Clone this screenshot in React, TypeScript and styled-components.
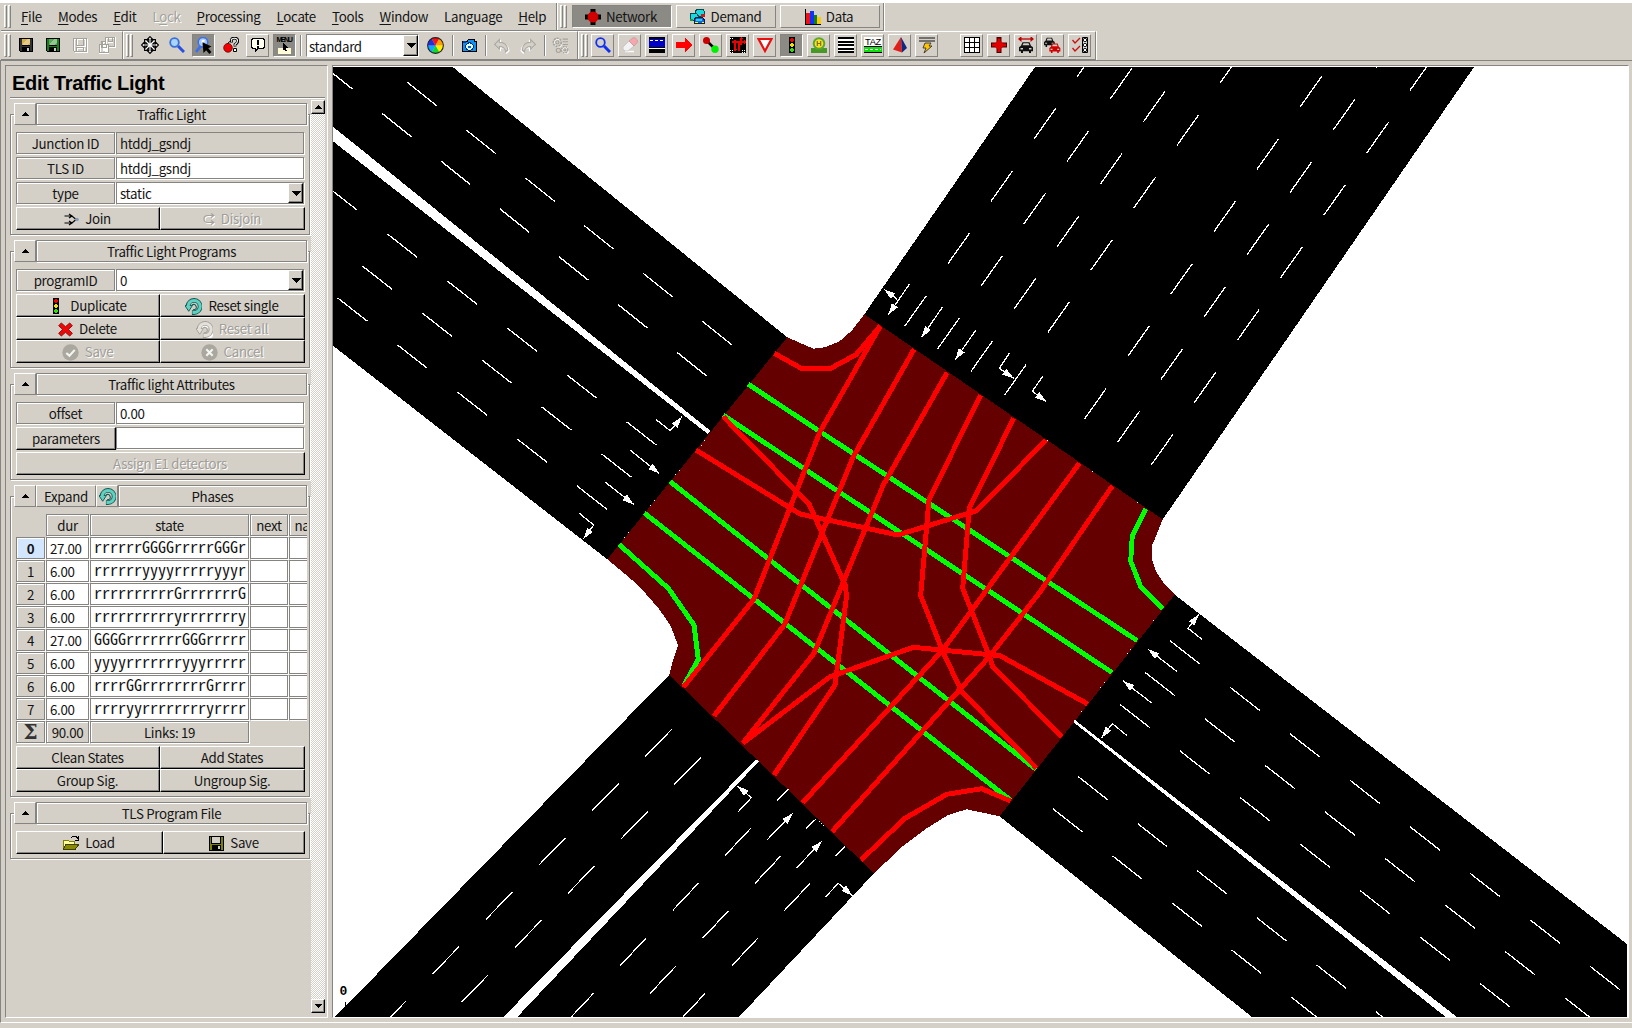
import React from "react";
import styled, { createGlobalStyle, css } from "styled-components";

const FACE = "#d4d0c8";
const SHADE = "#868480";
const PRESSED = "#8c8a84";

const Global = createGlobalStyle`
  html, body { margin: 0; padding: 0; background: ${FACE}; }
  body {
    overflow: hidden;
    font-family: "Noto Sans CJK SC", "Noto Sans", sans-serif;
    font-size: 13.33px;
    letter-spacing: -0.32px;
    color: #141414;
  }
  * { box-sizing: border-box; }
`;

/* ---------- frames ---------- */
const groove = css`
  border: 1px solid ${SHADE};
  box-shadow: inset 1px 1px 0 #fff, 1px 1px 0 #fff;
`;
const raised = css`
  border: 1px solid;
  border-color: #fff #000 #000 #fff;
  box-shadow: inset -1px -1px 0 ${SHADE};
`;
const thinRaised = css`
  border: 1px solid;
  border-color: #fff ${SHADE} ${SHADE} #fff;
`;

const Window = styled.div`
  width: 1632px;
  height: 1028px;
  display: flex;
  flex-direction: column;
  background: ${FACE};
  border-top: 3px solid #fff;
  overflow: hidden;
`;
const BarRow = styled.div<{ $h: number }>`
  display: flex;
  height: ${(p) => p.$h}px;
  flex: none;
  padding-left: 1px;
`;
const Bar = styled.div<{ $w: number; $top?: boolean }>`
  display: flex;
  align-items: center;
  width: ${(p) => p.$w}px;
  flex: none;
  padding-left: 3px;
  border-right: 1px solid ${SHADE};
  border-bottom: 1px solid ${SHADE};
  border-top: ${(p) => (p.$top ? "1px solid #fff" : "none")};
  box-shadow: 1px 0 0 #fff;
`;
const Grip = styled.div`
  display: flex;
  gap: 1px;
  height: 23px;
  width: 7px;
  flex: none;
  &::before, &::after {
    content: "";
    width: 3px;
    border: 1px solid;
    border-color: #fff ${SHADE} ${SHADE} #fff;
  }
`;
const Menus = styled.div`
  display: flex;
  padding-left: 10px;
  padding-top: 1px;
  gap: 16px;
  line-height: 24px;
  white-space: nowrap;
`;
const MenuName = styled.span<{ $off?: boolean }>`
  color: ${(p) => (p.$off ? "#a5a29b" : "#141414")};
  text-shadow: ${(p) => (p.$off ? "1px 1px 0 #fff" : "none")};
  u { text-underline-offset: 2px; text-decoration-thickness: 1px; }
`;
const ModeTabs = styled.div`
  display: flex;
  gap: 4px;
  padding-left: 5px;
`;
const ModeTab = styled.div<{ $on?: boolean }>`
  display: flex;
  align-items: center;
  justify-content: center;
  gap: 5px;
  width: 100px;
  height: 23px;
  padding-right: 2px;
  line-height: 21px;
  ${thinRaised}
  ${(p) => p.$on && css`background: ${PRESSED}; border-color: ${SHADE} #fff #fff ${SHADE};`}
`;
const Tools = styled.div<{ $pl: number }>`
  display: flex;
  align-items: center;
  gap: 4px;
  padding-left: ${(p) => p.$pl}px;
`;
const Tool = styled.div<{ $kind?: "flat" | "up" | "down" }>`
  display: flex;
  align-items: center;
  justify-content: center;
  width: 23px;
  height: 23px;
  padding-bottom: 1px;
  border: 1px solid transparent;
  ${(p) => p.$kind === "up" && thinRaised}
  ${(p) => p.$kind === "down" && css`background: ${PRESSED}; border-color: ${SHADE} #fff #fff ${SHADE};`}
`;
const Sep = styled.div<{ $ml?: number; $mr?: number }>`
  width: 2px;
  height: 21px;
  margin: 0 ${(p) => p.$mr ?? 0}px 0 ${(p) => p.$ml ?? 0}px;
  border-left: 1px solid ${SHADE};
  border-right: 1px solid #fff;
`;
const Gap = styled.div<{ $w: number }>`
  width: ${(p) => p.$w}px;
`;
const SchemeBox = styled.div`
  display: flex;
  width: 113px;
  height: 23px;
  margin-right: 1px;
  background: #fff;
  border: 1px solid;
  border-color: ${SHADE} #fff #fff ${SHADE};
  padding: 0 0 0 2px;
  line-height: 23px;
  justify-content: space-between;
`;
const DropBtn = styled.div`
  display: flex;
  align-items: center;
  justify-content: center;
  width: 15px;
  background: ${FACE};
  ${raised}
`;

/* ---------- main area ---------- */
const Main = styled.div`
  display: flex;
  height: 963px;
  flex: none;
  border-top: 1px solid ${SHADE};
  border-left: 1px solid ${SHADE};
  border-bottom: 1px solid #fff;
  padding: 4px 3px 4px 4px;
  gap: 4px;
`;
const SidePanel = styled.div`
  width: 323px;
  flex: none;
  display: flex;
  flex-direction: column;
  border: 1px solid;
  border-color: ${SHADE} #fff #fff ${SHADE};
  padding: 0 2px 4px 4px;
`;
const PanelTitle = styled.div`
  height: 32px;
  flex: none;
  padding: 1px 0 0 2px;
  font: bold 20px/33px "Liberation Sans", Arial, sans-serif;
  letter-spacing: -0.3px;
  color: #000;
  border-bottom: 1px solid ${SHADE};
  box-shadow: 0 1px 0 #fff;
`;
const PanelBody = styled.div`
  display: flex;
  flex: 1;
  padding-top: 2px;
`;
const Groups = styled.div`
  width: 301px;
  flex: none;
  padding-top: 3px;
  display: flex;
  flex-direction: column;
  gap: 5px;
`;
const Scroll = styled.div`
  width: 15px;
  display: flex;
  flex-direction: column;
  justify-content: space-between;
  background: repeating-conic-gradient(#fff 0 25%, ${FACE} 0 50%) 0 0 / 2px 2px;
`;
const ScrollBtn = styled.div`
  height: 14px;
  display: flex;
  align-items: center;
  justify-content: center;
  background: ${FACE};
  ${raised}
`;
const Group = styled.section`
  width: 300px;
  margin-top: 11px;
  border: 1px solid ${SHADE};
  box-shadow: inset 1px 1px 0 #fff, 1px 1px 0 #fff;
  padding: 0 0 4px 5px;
`;
const GroupHead = styled.div`
  display: flex;
  width: 294px;
  height: 23px;
  margin: -12px 0 6px -2px;
  background: ${FACE};
`;
const HeadBtn = styled.div<{ $w: number }>`
  display: flex;
  align-items: center;
  justify-content: center;
  width: ${(p) => p.$w}px;
  height: 22px;
  ${thinRaised}
`;
const HeadTitle = styled.div`
  flex: 1;
  height: 22px;
  margin-right: 1px;
  line-height: 22px;
  text-align: center;
  ${groove}
`;
const Row = styled.div`
  display: flex;
  height: 25px;
`;
const Label = styled.div<{ $button?: boolean }>`
  width: 99px;
  height: 22px;
  margin-right: 1px;
  line-height: 22px;
  text-align: center;
  ${groove}
  ${(p) => p.$button && css`width: 100px; height: 23px; margin-right: 0; ${raised}`}
`;
const Field = styled.div<{ $grey?: boolean }>`
  display: flex;
  justify-content: space-between;
  width: 188px;
  height: 22px;
  padding-left: 3px;
  line-height: 22px;
  background: ${(p) => (p.$grey ? FACE : "#fff")};
  border: 1px solid ${SHADE};
  box-shadow: 1px 1px 0 #fff;
`;
const Buttons = styled.div<{ $first?: number }>`
  display: grid;
  width: 289px;
  grid-template-columns: ${(p) => p.$first ?? 144}px 1fr;
  grid-auto-rows: 23px;
`;
const Button = styled.div<{ $off?: boolean; $wide?: boolean }>`
  display: flex;
  align-items: center;
  justify-content: center;
  gap: 6px;
  padding: 1px 1px 0 0;
  line-height: 20px;
  white-space: nowrap;
  ${raised}
  ${(p) => p.$wide && css`grid-column: 1 / 3; padding-left: 20px;`}
  ${(p) => p.$off && css`color: #a09d97; text-shadow: 1px 1px 0 #fff;`}
`;
const Table = styled.div`
  display: grid;
  grid-template-columns: 30px 44px 160px 39px 46px;
  grid-auto-rows: 23px;
  width: 291px;
  overflow: hidden;
  margin-bottom: 2px;
`;
const Cell = styled.div<{ $kind: "head" | "index" | "active" | "value" | "state" | "none" }>`
  margin: 0 1px 1px 0;
  line-height: 21px;
  text-align: center;
  white-space: nowrap;
  ${(p) => p.$kind !== "none" && groove}
  ${(p) => (p.$kind === "value" || p.$kind === "state") && css`
    background: #fff;
    box-shadow: 1px 1px 0 #fff;
    text-align: left;
    padding-left: 3px;
    line-height: 22px;
  `}
  ${(p) => p.$kind === "state" && css`
    font-family: "Noto Sans Mono CJK SC", "Liberation Mono", monospace;
    font-size: 16px;
    letter-spacing: 0;
    line-height: 17px;
  `}
  ${(p) => p.$kind === "active" && css`background: #d2e6ff; font-weight: bold;`}
`;
const SigmaCell = styled(Cell)`
  font: bold 20px/21px "DejaVu Serif", serif;
  color: #333;
`;
const Canvas = styled.div`
  flex: 1;
  border: 1px solid;
  border-color: ${SHADE} #fff #fff ${SHADE};
  padding-top: 1px;
  background: #fff;
  overflow: hidden;
  svg { display: block; }
`;

/* ---------- icons ---------- */
const Pix = ({ children, s = 16 }: { children: React.ReactNode; s?: number }) => (
  <svg width={s} height={s} viewBox="0 0 16 16" shapeRendering="crispEdges">{children}</svg>
);
const Smooth = ({ children, s = 16 }: { children: React.ReactNode; s?: number }) => (
  <svg width={s} height={s} viewBox="0 0 16 16">{children}</svg>
);
const Tri = ({ down, s = 8 }: { down?: boolean; s?: number }) => (
  <svg width={s} height={s / 2} viewBox="0 0 8 4" shapeRendering="crispEdges">
    <path d={down ? "M0 0H8L4 4Z" : "M0 4H8L4 0Z"} fill="#000" />
  </svg>
);
const Floppy = ({ body, tag }: { body: string; tag: string }) => (
  <Pix>
    <path d="M1 1H15V15H2L1 14Z" fill="#000" />
    <path d="M2 2H4V9H12V2H14V14H2Z" fill={body} />
    <path d="M4 2H12V8H4Z" fill={tag} />
    <path d="M5 6L9 2H12V5L9 8H5Z" fill="#fff" opacity=".35" />
    <path d="M4 10H12V15H4Z" fill="#000" />
    <path d="M9 11H11V14H9Z" fill="#c9c9c9" />
  </Pix>
);
const FloppyOff = () => (
  <Pix>
    <path d="M2.500 2.500H15.500V15.500H3.500L2.500 14.500ZM5 3V9H13V3M5 15V11H12V15" fill="none" stroke="#fff" />
    <path d="M1.500 1.500H14.500V14.500H2.500L1.500 13.500ZM4.500 2V8.500H11.500V2M4.500 14V10.500H11.500V14" fill="none" stroke="#a5a29b" />
  </Pix>
);
const FloppiesOff = () => (
  <Pix s={18}>
    <path d="M7 2H15V10H7ZM4 5H7M4 5V8M1.500 8.500H9V15.500H1.500ZM4 12H7V15M9 5H13" fill="none" stroke="#fff" strokeWidth="2" />
    <path d="M6.500 1.500H14.500V9.500H10M6.500 1.500V7M3.500 7V4.500H6M1.500 7.500H9.500V14.500H1.500ZM3.500 8V10.500H7.500V8M9 1.500V4.500H12.500V2" fill="none" stroke="#a5a29b" />
  </Pix>
);
const MoveIcon = () => (
  <Smooth s={18}>
    <path
      d="M8 .5L10.500 3H9V5.500L10.500 4V3.200H12.800V5.500H12L10.500 7H13V5.500L15.500 8L13 10.500V9H10.500L12 10.500H12.800V12.800H10.500V12L9 10.500V13H10.500L8 15.500L5.500 13H7V10.500L5.500 12V12.800H3.200V10.500H4L5.500 9H3V10.500L.5 8L3 5.500V7H5.500L4 5.500H3.200V3.200H5.500V4L7 5.500V3H5.500Z"
      fill="#fff" stroke="#000" strokeWidth="1"
    />
  </Smooth>
);
const MagnifierIcon = ({ stroke = "#3a6fd8", fill = "#a9d4ff", handle = "#2850e0" }) => (
  <Smooth>
    <path d="M9 9L15 15" stroke={handle} strokeWidth="3" />
    <circle cx="5.500" cy="5.500" r="4.300" fill={fill} stroke={stroke} strokeWidth="1.800" />
  </Smooth>
);
const InspectIcon = () => (
  <Smooth s={17}>
    <path d="M5 9L1 14" stroke="#3c6ff0" strokeWidth="2.500" />
    <circle cx="7.500" cy="5" r="4.500" fill="#a9c8f4" stroke="#3c6ff0" strokeWidth="1.500" />
    <path d="M7 3V6M7 3L9 4" stroke="#fff" strokeWidth="1.500" />
    <path d="M7 5L15.500 9L12.500 10.500L15.500 14L13.500 16L10.500 12.500L8 15Z" fill="#000" />
  </Smooth>
);
const HelpCherry = () => (
  <Smooth>
    <path d="M8.500 5.500V3Q8.500 1 11.500 1T14.800 3.800Q14.800 6 12 7.500V9.500" fill="none" stroke="#000" strokeWidth="2.800" />
    <path d="M8.500 5V3Q8.500 1.200 11.500 1.200T14.500 3.800Q14.500 6 12 7.500V9" fill="none" stroke="#fff" strokeWidth="1.100" />
    <path d="M10.500 11.500H13.500V14.500H10.500Z" fill="#fff" stroke="#000" />
    <path d="M4.500 7Q6 4 8.500 4" fill="none" stroke="#000" />
    <ellipse cx="5" cy="10.800" rx="4.300" ry="4.400" fill="#f00000" stroke="#600" strokeWidth=".8" />
  </Smooth>
);
const BubbleIcon = () => (
  <Pix>
    <path d="M3 1.500H13L14.500 3V10L13 11.500H8L5 15V11.500H3L1.500 10V3Z" fill="#fffff0" stroke="#000" />
    <path d="M7 3H9V8H7ZM7 9H9V11H7Z" fill="#000" />
  </Pix>
);
const MenuIcon = () => (
  <svg width="19" height="19" viewBox="0 0 19 19" shapeRendering="crispEdges">
    <path d="M3 12H16V18H3Z" fill="#fffbd6" />
    <path d="M8 7L13 12H11L12 15H10L9 13L8 14Z" fill="#000" />
    <text x="1.500" y="6" fontSize="7.200" fontWeight="bold" textLength="16" fontFamily="Liberation Sans, sans-serif">MENU</text>
  </svg>
);
const WheelIcon = () => (
  <Smooth s={17}>
    <path d="M8 8L4.300 1.500A7.500 7.500 0 0 1 11.700 1.500Z" fill="#ff1010" />
    <path d="M8 8L11.700 1.500A7.500 7.500 0 0 1 15.500 8Z" fill="#ffa000" />
    <path d="M8 8H15.500A7.500 7.500 0 0 1 11.700 14.500Z" fill="#fff000" />
    <path d="M8 8L11.700 14.500A7.500 7.500 0 0 1 4.300 14.500Z" fill="#10d830" />
    <path d="M8 8L4.300 14.500A7.500 7.500 0 0 1 .5 8Z" fill="#10a8ff" />
    <path d="M8 8H.5A7.500 7.500 0 0 1 4.300 1.500Z" fill="#2030e0" />
    <circle cx="8" cy="8" r="7.400" fill="none" stroke="#222" />
  </Smooth>
);
const CameraIcon = () => (
  <Pix s={17}>
    <path d="M1 4H6L7 2H13V4H15V14H1Z" fill="#1090f0" stroke="#000" />
    <path d="M2 4H5V6H2Z" fill="#0040a0" />
    <circle cx="8" cy="9" r="3.500" fill="#dff" stroke="#003070" />
    <path d="M7 8H9V10H7Z" fill="#1060d0" />
  </Pix>
);
const UndoOff = ({ flip }: { flip?: boolean }) => (
  <svg width="17" height="17" viewBox="0 0 16 16">
    <g transform={flip ? "translate(16 0) scale(-1 1)" : undefined}>
      <path d="M1.500 7L6 2.500V5Q13 5 14 12L12 14Q11 9 6 9V11.500Z" fill="none" stroke="#fff" strokeWidth="1.200" transform="translate(1 1)" />
      <path d="M1.500 7L6 2.500V5Q13 5 14 12L12 14Q11 9 6 9V11.500Z" fill={FACE} stroke="#aaa7a0" />
    </g>
  </svg>
);
const GearsOff = () => (
  <svg width="17" height="17" viewBox="0 0 16 16">
    <g fill="none" stroke="#fff" transform="translate(.8 .8)">
      <circle cx="5" cy="5" r="3.500" /><circle cx="12" cy="12" r="2.800" />
    </g>
    <g fill="none" stroke="#a5a29b">
      <circle cx="5" cy="5" r="3.800" strokeDasharray="2 .8" strokeWidth="1.500" /><circle cx="5" cy="5" r="1.500" />
      <circle cx="12" cy="12" r="3" strokeDasharray="1.600 .8" strokeWidth="1.400" /><circle cx="12" cy="12" r="1" />
      <circle cx="6" cy="12.500" r="2" />
      <path d="M10 2H15M10 4.500H15M10 7H15" />
    </g>
  </svg>
);
const NetworkIcon = () => (
  <Smooth>
    <path d="M5.500 0H10.500V16H5.500ZM0 5.500H16V10.500H0Z" fill="#000" />
    <circle cx="8" cy="8" r="5.500" fill="#d00000" />
  </Smooth>
);
const DemandIcon = () => (
  <Pix s={17}>
    <path d="M7 1H13L15 4V8H6V4Z" fill="#18d8e0" stroke="#084850" />
    <path d="M11 6H15V8H11Z" fill="#c02020" />
    <path d="M2 5H7L9 8V12H1V8Z" fill="#18d8e0" stroke="#084850" />
    <path d="M1 10H4V12H1Z" fill="#18a030" />
    <path d="M6 9H13L15 12V15H5V12Z" fill="#2060d8" stroke="#082048" />
    <path d="M7 10H12V12H7Z" fill="#18d8e0" /><path d="M6 13H8V14H6ZM12 13H14V14H12Z" fill="#ff0" />
  </Pix>
);
const DataIcon = () => (
  <Pix>
    <path d="M0 0H1V15H16V16H0Z" fill="#000" />
    <path d="M1 4H5V15H1Z" fill="#f01010" /><path d="M5 2H9V15H5Z" fill="#1030ff" />
    <path d="M9 6H12V15H9Z" fill="#108010" /><path d="M12 8H16V15H12Z" fill="#ffc800" />
  </Pix>
);
const EraserIcon = () => (
  <Smooth>
    <path d="M3 14.500H12" stroke="#fff" strokeWidth="1.500" />
    <path d="M1 10L7 4L12 9L6 14H3L1 12Z" fill="#f2f2f2" stroke="#b8b4b4" strokeWidth=".6" />
    <path d="M7 4L11 .8H13L15.300 3V5.500L12 9Z" fill="#f4a8ae" stroke="#c48a90" strokeWidth=".6" />
  </Smooth>
);
const RoadIcon = () => (
  <Pix>
    <path d="M0 0H16V16H0Z" fill="#000" /><path d="M0 2H16V10H0Z" fill="#0000c8" />
    <path d="M1 3H4V4H1ZM6 3H9V4H6ZM11 3H14V4H11ZM0 11H16V12H0Z" fill="#fff" />
  </Pix>
);
const RedArrow = () => (
  <Pix><path d="M0 5H9V1L16 8L9 15V11H0Z" fill="#f00" /></Pix>
);
const LinkIcon = () => (
  <Smooth>
    <path d="M5 5L12 12" stroke="#000" strokeWidth="2.500" />
    <circle cx="3.500" cy="3.500" r="3.500" fill="#c80000" /><circle cx="12" cy="12.200" r="3.700" fill="#00f000" />
  </Smooth>
);
const CrossingIcon = () => (
  <Pix>
    <path d="M0 0H16V16H0Z" fill="#000" />
    <path d="M0 1H4M0 13H4M12 13H16M0 15H4M12 15H16" stroke="#fff" strokeDasharray="1 1" />
    <path d="M5 3V14M2 5H14M11 2V8M9 14V5" fill="none" stroke="#e80000" strokeWidth="1.200" />
    <path d="M11 0L13 2H9ZM14 3V7L16 5ZM3 12H7L5 14Z" fill="#f00" />
  </Pix>
);
const YieldIcon = () => (
  <Smooth><path d="M1.500 2H14.500L8 14Z" fill="#fff" stroke="#e81010" strokeWidth="2.200" /></Smooth>
);
const LightIcon = () => (
  <Pix>
    <path d="M5 0H11V16H5Z" fill="#000" />
    <path d="M7 1H9V2H10V4H9V5H7V4H6V2H7Z" fill="#f00000" />
    <path d="M7 6H9V7H10V9H9V10H7V9H6V7H7Z" fill="#f0e000" />
    <path d="M7 11H9V12H10V14H9V15H7V14H6V12H7Z" fill="#30e000" />
  </Pix>
);
const StopIcon = () => (
  <Smooth>
    <path d="M0 11H4V9H12V11H16V16H0Z" fill="#489828" />
    <circle cx="8" cy="6.500" r="6.300" fill="#58a830" /><circle cx="8" cy="6.500" r="4.300" fill="#ffe020" />
    <path d="M6.300 4V9M9.700 4V9M6.300 6.500H9.700" stroke="#7a7010" strokeWidth="1.200" />
  </Smooth>
);
const LinesIcon = () => (
  <Pix>
    <path d="M0 0H16V16H0Z" fill="#fff" />
    <path d="M0 0H16V2H0ZM0 4H16V5.500H0ZM0 7H16V9H0ZM0 11H16V12.500H0ZM0 14H16V16H0Z" fill="#000" />
  </Pix>
);
const TazIcon = () => (
  <svg width="18" height="16" viewBox="0 0 18 16" shapeRendering="crispEdges">
    <path d="M0 0H18V16H0Z" fill="#fff" />
    <text x="1" y="8" fontSize="9.500" textLength="16" lengthAdjust="spacingAndGlyphs" fontFamily="Liberation Sans, sans-serif">TAZ</text>
    <path d="M0 9H18V16H0Z" fill="#000" /><path d="M0 10H18V15H0Z" fill="#10e010" />
    <path d="M1 12.500H17" stroke="#fff" strokeDasharray="3 2" />
  </svg>
);
const PyramidIcon = () => (
  <Smooth>
    <path d="M9 0L1 12.500L10 15.500Z" fill="#e02018" /><path d="M9 0L15 11L10 15.500Z" fill="#102880" />
  </Smooth>
);
const WireIcon = () => (
  <Smooth>
    <path d="M0 1H16M0 4H16" stroke="#111" strokeWidth="1.200" />
    <path d="M6 6H12L10 9H13L5 16L7 11H4Z" fill="#ffc400" stroke="#333" strokeWidth=".9" />
  </Smooth>
);
const GridIcon = () => (
  <Pix><path d="M.5.5H15.500V15.500H.5ZM.5 5.500H15.500M.5 10.500H15.500M5.500.5V15.500M10.500.5V15.500" fill="#fff" stroke="#000" /></Pix>
);
const RedCross = () => (
  <Smooth>
    <path d="M5.500 0H10.500V16H5.500ZM0 5.500H16V10.500H0Z" fill="#480000" />
    <path d="M6.500 1.500H9.500V5L11 6.500H15V9.500H11L9.500 11V15H6.500V11L5 9.500H1V6.500H5L6.500 5Z" fill="#e00000" />
    <circle cx="8" cy="8" r="4" fill="#e00000" />
  </Smooth>
);
const CarPath = ({ c = "#111" }: { c?: string }) => (
  <>
    <path d="M3 7L4.500 3H11.500L13 7L15 8.500V13H13V15H11V13H5V15H3V13H1V8.500Z" fill={c} />
    <path d="M4.500 6.500L5.500 4.200H10.500L11.500 6.500ZM2.500 9.500H5V11H2.500ZM11 9.500H13.500V11H11Z" fill={FACE} />
  </>
);
const CarWidthIcon = () => (
  <Smooth>
    <path d="M1 2H15" stroke="#c00000" strokeWidth="1.300" /><path d="M0 2L3.500 -1V5ZM16 2L12.500 -1V5Z" fill="#c00000" />
    <g transform="translate(0 2.500) scale(1 .9)"><CarPath /></g>
  </Smooth>
);
const CarsIcon = () => (
  <Smooth s={17}>
    <g transform="translate(-.7 -1.500) scale(.72)"><CarPath /></g>
    <g transform="translate(4.300 4) scale(.74)"><CarPath c="#d00000" /></g>
  </Smooth>
);
const ChecksIcon = () => (
  <Smooth>
    <path d="M.5 3L3 6L8 1M.5 11L3 14L8 9" fill="none" stroke="#c81010" strokeWidth="1.300" />
    <path d="M10.500.5H15.500V15.500H10.500Z" fill="#ddd" stroke="#000" />
    <g fill="#fff" stroke="#000" strokeWidth=".9"><circle cx="13" cy="3" r="1.700" /><circle cx="13" cy="8" r="1.700" /><circle cx="13" cy="13" r="1.700" /></g>
  </Smooth>
);
const JoinIcon = ({ off }: { off?: boolean }) => (
  <svg width={off ? 12 : 15} height="13" viewBox={off ? "3 1.500 12 13" : "0 1.500 15 13"}>
    {off ? (
      <g fill="none" strokeWidth="1.200">
        <path d="M14 5H9Q5 5 5 8.500T9 12H14M12 3L15 5L12 7M12 10L15 12L12 14" stroke="#fff" />
        <path d="M13 4H8Q4 4 4 7.500T8 11H13M11 2L14 4L11 6M11 9L14 11L11 13" stroke="#a5a29b" />
      </g>
    ) : (
      <>
        <path d="M.5 4.500H8L11.500 7.500M.5 11.500H8L11.500 8.500M5 2.500L8 4.500L5 6.500M5 9.500L8 11.500L5 13.500" fill="none" stroke="#000" strokeWidth="1.200" />
        <circle cx="13" cy="8" r="1.800" fill="#8498b8" />
      </>
    )}
  </svg>
);
const ResetIcon = ({ off }: { off?: boolean }) => {
  const edge = off ? "#a5a29b" : "#145a54";
  const fill = off ? "#e4e1da" : "#60d0c0";
  return (
    <Smooth s={17}>
      {off && <path d="M4 6A5.600 5.600 0 1 1 9 14.500" transform="translate(.9 .9)" fill="none" stroke="#fff" strokeWidth="4" />}
      <path d="M2.800 7.500A5.700 5.700 0 1 1 8.500 13.700H6.500" fill="none" stroke={edge} strokeWidth="4.400" />
      <path d="M-.2 7H7L3.500 12.500Z" fill={fill} stroke={edge} strokeWidth=".9" />
      <path d="M2.900 8A5.700 5.700 0 1 1 8.500 13.700H7" fill="none" stroke={fill} strokeWidth="2.900" />
      <path d="M6.500 6.500Q9.500 5 10.500 8T7.500 11" fill="none" stroke={edge} strokeWidth="1" />
    </Smooth>
  );
};
const DeleteIcon = () => (
  <Smooth s={15}>
    <path d="M3.500 1L8 5L12.500 1L15.300 4L11 8L15.300 12L12.500 15L8 11L3.500 15L.7 12L5 8L.7 4Z" fill="#f00808" stroke="#7a0000" strokeWidth=".9" />
  </Smooth>
);
const RoundOff = ({ x }: { x?: boolean }) => (
  <Smooth s={17}>
    <circle cx="8" cy="8" r="7.700" fill="#aaa79f" />
    <path d={x ? "M5 5L11 11M11 5L5 11" : "M4 8.500L7 11L12 5.500"} fill="none" stroke="#f4f4f0" strokeWidth="2" />
  </Smooth>
);
const FolderIcon = () => (
  <Pix>
    <path d="M0 5H5L6 6H11V14H0Z" fill="#ffffa0" stroke="#808000" />
    <path d="M3 9H16L12 14.500H0Z" fill="#8a8a00" stroke="#404000" />
    <path d="M8 3L10 1H13L15 4M15 1V5H12" fill="none" stroke="#000" />
  </Pix>
);
const OliveFloppy = () => (
  <Pix>
    <path d="M1 1H15V15H1Z" fill="#808000" stroke="#000" />
    <path d="M3.500 1H12.500V8.500H3.500Z" fill="#d4d0c8" stroke="#000" /><path d="M4 10H13V15H4Z" fill="#000" /><path d="M10 11H12V14H10Z" fill="#d4d0c8" />
  </Pix>
);

/* ---------- road network ---------- */
type P = [number, number];
type Series = { at: P; step: P; d: P; n: number };
const nwUp = { step: [59, 47.8] as P, d: [29.4, 23.5] as P };
const nwLo = { step: [59.85, 47] as P, d: [29.7, 23.2] as P };
const ne = { step: [-43.1, 62.4] as P, d: [-21.6, 30.5] as P };
const seUp = { step: [60.05, 46.55] as P, d: [29.7, 23.2] as P };
const seLo = { step: [59.6, 47.1] as P, d: [29.6, 23.3] as P };
const swL = { step: [-53.2, 54.4] as P, d: [-26.7, 27.3] as P };
const swR = { step: [-52.4, 55] as P, d: [-25.7, 27.3] as P };
const laneMarks: Series[] = [
  { at: [407.3, 82.3], n: 6, ...nwUp },
  { at: [323, 65.5], n: 7, ...nwUp },
  { at: [327.6, 187], n: 6, ...nwLo },
  { at: [362.3, 266], n: 5, ...nwLo },
  { at: [337.7, 298], n: 5, ...nwLo },
  { at: [1098.8, 46], n: 5, ...ne },
  { at: [1131.7, 68.6], n: 5, ...ne },
  { at: [1165, 91.3], n: 5, ...ne },
  { at: [1241.7, 52.5], n: 6, ...ne },
  { at: [1321.7, 76.4], n: 6, ...ne },
  { at: [1398, 37], n: 7, ...ne },
  { at: [1431.5, 60], n: 7, ...ne },
  { at: [1170, 640.7], n: 8, ...seUp },
  { at: [1145, 672.3], n: 8, ...seUp },
  { at: [1120, 704.4], n: 7, ...seUp },
  { at: [1078, 776.4], n: 6, ...seLo },
  { at: [1053, 808.8], n: 5, ...seLo },
  { at: [672, 729], n: 6, ...swL },
  { at: [701, 757.2], n: 5, ...swL },
  { at: [750.7, 828.3], n: 4, ...swR },
  { at: [780.7, 856], n: 3, ...swR },
  { at: [810, 883.4], n: 3, ...swR },
  { at: [788.5, 789.3], step: [0, 0], d: [-11.5, 11.5], n: 1 },
  { at: [816.5, 818.5], step: [0, 0], d: [-10.2, 9.8], n: 1 },
  { at: [845.2, 846.5], step: [0, 0], d: [-10, 9.5], n: 1 },
];
const marksPath = laneMarks
  .flatMap(({ at, step, d, n }) =>
    Array.from({ length: n }, (_, i) => `M${at[0] + step[0] * i} ${at[1] + step[1] * i}l${d[0]} ${d[1]}`))
  .join("");

const arrows: P[][] = [
  [[655.7, 419.3], [670.3, 430.7], [682, 416.7]],
  [[630.3, 450.3], [659.5, 473.5]],
  [[605.3, 482.2], [633.8, 504.5]],
  [[579.3, 513.3], [593.7, 525], [583.3, 539]],
  [[909.3, 284.3], [888.3, 314.8]],
  [[897.5, 299.5], [884, 289.3]],
  [[942.3, 307.3], [921.5, 337.5]],
  [[975.7, 330.3], [955.2, 359.8]],
  [[1009.3, 353.3], [999.3, 368.3], [1013.8, 378.4]],
  [[1042.7, 376.3], [1032.3, 391.3], [1046.5, 401.5]],
  [[1202.3, 639.7], [1188, 628.3], [1198.8, 614.2]],
  [[1177.3, 671.7], [1148, 649.2]],
  [[1151.7, 703], [1123, 680.9]],
  [[1126.7, 735.3], [1112.3, 723.7], [1101.5, 737.9]],
  [[738.3, 811.7], [751.3, 797.7], [737.5, 785.9]],
  [[767.3, 839.7], [792.8, 813.2]],
  [[796.3, 868.3], [821.8, 841.2]],
  [[825.7, 896.7], [838.3, 883.3], [852.4, 895.8]],
];
const headPath = (pts: P[]) => {
  const [a, b] = pts.slice(-2);
  const len = Math.hypot(b[0] - a[0], b[1] - a[1]);
  const ux = (b[0] - a[0]) / len;
  const uy = (b[1] - a[1]) / len;
  const bx = b[0] - ux * 11.5;
  const by = b[1] - uy * 11.5;
  return `M${b[0]} ${b[1]}L${bx - uy * 3.6} ${by + ux * 3.6}L${bx + uy * 3.6} ${by - ux * 3.6}Z`;
};

const greenLinks = [
  "748.3,384.3 1137.3,640.7",
  "723.3,415.3 1112,672.5",
  "670,481.5 1036,769.3",
  "644.3,513 1010.7,800.3",
  "619,544.3 668.3,588.3 694,625 698.3,659.5 684,685",
  "1146,509 1132.3,535.7 1130.7,561 1140.7,586.7 1162.7,609",
];
const redLinks = [
  "774.3,353.3 802,368.7 830,368.7 856,354.7 880.3,326",
  "880.3,326 820,431.7 754,599 683.3,687.3",
  "914,349.3 853.3,456.7 784.3,625 714,716",
  "947,372.7 883.3,485 814,653.3 742.7,743.3",
  "980.7,395.3 929,499.3 920.7,595.5 942.5,650.7 961.7,691.7 1036.7,768.3",
  "1013.7,418.3 969.3,508.3 962.7,588.3 990,658 992.7,666.7 1061.7,736.7",
  "696,450 800,514 898,535 976.7,510.7 1046,440",
  "723.3,416.7 809.3,504.5 845.5,586 846.5,596.7 835,685 774,775",
  "742.7,743.3 830,676.7 913.3,647.3 1000,655.7 1087.7,704",
  "1079.3,463.3 942.7,650 802.7,802.7",
  "1112.3,486 1040,592 989,657 832.3,831.5",
  "861,860 905,818.3 946.7,794.3 981.7,788.7 1010.7,801",
];
const stopDots: P[] = [
  [704, 440], [701, 445], [679, 470], [675, 474], [654, 500], [650, 505], [628, 532], [624, 537],
  [1047, 440], [1092, 471], [1137, 502], [1153, 620], [1130, 649], [1127, 653], [1104, 682], [1100, 687], [1081, 711],
  [819, 821], [821, 823], [823, 825],
];

const Network = () => (
  <svg width="1295" height="951" viewBox="333 67 1295 951" shapeRendering="crispEdges">
    <g fill="#000">
      <path d="M333 67H452.700L787.300 337.300L607.300 559.300L333 345.700Z" />
      <path d="M1035 67H1474L1162.700 519.500L864.300 314.300Z" />
      <path d="M1174.700 594.700L1627 944V1017H1252L999.500 816.200Z" />
      <path d="M669.300 674.700L874 873.300L739 1017H335Z" />
    </g>
    <path
      fill="#640000"
      d="M787.300 337.300L813.300 348.700L825 347.300L839 341.700L851.700 330.700L864.300 314.300L1162.700 519.500L1152.300 545V560.700L1156 571.700L1163.300 582.700L1174.700 594.700L999.500 816.200L966.700 809.300L948 815L926.700 828.300L903.300 845.700L874 873.300L669.300 674.700L671.700 665L678 645L670.700 626L659.300 609.300L646.700 594.700L633.300 581L607.300 559.300Z"
    />
    <g fill="#fff">
      <path d="M333 126.700L710.300 430.700L708 434.200L333 141.300Z" />
      <path d="M1074.700 719.800L1457 1017H1445.700L1073.300 722Z" />
      <path d="M756.200 759.300L758.800 761.500L517.300 1017H503.300Z" />
    </g>
    <path d={marksPath} stroke="#fff" strokeWidth="1.300" fill="none" />
    <g stroke="#fff" strokeWidth="1.250" fill="none">
      {arrows.map((a, i) => <polyline key={i} points={a.join(" ")} />)}
    </g>
    <path d={arrows.map(headPath).join("")} fill="#fff" />
    {stopDots.map(([x, y]) => <rect key={`${x}-${y}`} x={x} y={y} width="1" height="1" fill="#fff" />)}
    <g fill="none" stroke="#00ff00" strokeWidth="4.900">
      {greenLinks.map((g) => <polyline key={g} points={g} />)}
    </g>
    <g fill="none" stroke="#ff0000" strokeWidth="4.900">
      {redLinks.map((r) => <polyline key={r} points={r} />)}
    </g>
    <text x="339.500" y="995" fontSize="13" fontWeight="bold" fontFamily="Liberation Mono, monospace">0</text>
    <path d="M345 1002H346V1008H345Z" fill="#000" />
  </svg>
);

/* ---------- data ---------- */
const menus: [string, string, string, boolean?][] = [
  ["", "F", "ile"], ["", "M", "odes"], ["", "E", "dit"], ["L", "o", "ck", true], ["", "P", "rocessing"],
  ["", "L", "ocate"], ["", "T", "ools"], ["", "W", "indow"], ["Langua", "g", "e"], ["", "H", "elp"],
];
const editTools: [React.ReactNode, boolean?][] = [
  [<MagnifierIcon stroke="#1030f0" fill="#d4d0c8" handle="#1030f0" />], [<EraserIcon />], [<RoadIcon />], [<RedArrow />],
  [<LinkIcon />], [<CrossingIcon />], [<YieldIcon />], [<LightIcon />, true], [<StopIcon />], [<LinesIcon />],
  [<TazIcon />], [<PyramidIcon />], [<WireIcon />],
];
const viewTools = [<GridIcon />, <RedCross />, <CarWidthIcon />, <CarsIcon />, <ChecksIcon />];
const phases: [string, string][] = [
  ["27.00", "rrrrrrGGGGrrrrrGGGr"], ["6.00", "rrrrrryyyyrrrrryyyr"],
  ["6.00", "rrrrrrrrrrGrrrrrrrG"], ["6.00", "rrrrrrrrrryrrrrrrry"],
  ["27.00", "GGGGrrrrrrrGGGrrrrr"], ["6.00", "yyyyrrrrrrryyyrrrrr"],
  ["6.00", "rrrrGGrrrrrrrrGrrrr"], ["6.00", "rrrryyrrrrrrrryrrrr"],
];

const Section = ({ title, extra, children }: { title: string; extra?: React.ReactNode; children: React.ReactNode }) => (
  <Group>
    <GroupHead>
      <HeadBtn $w={22}><Tri /></HeadBtn>
      {extra}
      <HeadTitle>{title}</HeadTitle>
    </GroupHead>
    {children}
  </Group>
);
const Combo = ({ value }: { value: string }) => (
  <Field>{value}<DropBtn><Tri down s={10} /></DropBtn></Field>
);

export default function App() {
  return (
    <Window>
      <Global />
      <BarRow $h={28}>
        <Bar $w={556}>
          <Grip />
          <Menus>
            {menus.map(([a, u, b, off]) => (
              <MenuName key={a + u + b} $off={off}>{a}<u>{u}</u>{b}</MenuName>
            ))}
          </Menus>
        </Bar>
        <Bar $w={327}>
          <Grip />
          <ModeTabs>
            <ModeTab $on><NetworkIcon />Network</ModeTab>
            <ModeTab><DemandIcon />Demand</ModeTab>
            <ModeTab><DataIcon />Data</ModeTab>
          </ModeTabs>
        </Bar>
      </BarRow>
      <BarRow $h={29}>
        <Bar $w={122} $top>
          <Grip />
          <Tools $pl={3}>
            <Tool><Floppy body="#333" tag="#d8b048" /></Tool>
            <Tool><Floppy body="#188018" tag="#58a858" /></Tool>
            <Tool><FloppyOff /></Tool>
            <Tool><FloppiesOff /></Tool>
          </Tools>
        </Bar>
        <Bar $w={455} $top>
          <Grip />
          <Tools $pl={5}>
            <Tool><MoveIcon /></Tool>
            <Tool><MagnifierIcon /></Tool>
            <Tool $kind="down"><InspectIcon /></Tool>
            <Tool><HelpCherry /></Tool>
            <Tool $kind="up"><BubbleIcon /></Tool>
            <Tool $kind="down"><MenuIcon /></Tool>
            <Sep />
            <SchemeBox>standard<DropBtn><Tri down s={10} /></DropBtn></SchemeBox>
            <Tool><WheelIcon /></Tool>
            <Sep $ml={1} />
            <Tool><CameraIcon /></Tool>
            <Sep $mr={-1} />
            <Tool><UndoOff /></Tool>
            <Tool><UndoOff flip /></Tool>
            <Sep $mr={-1} />
            <Tool><GearsOff /></Tool>
          </Tools>
        </Bar>
        <Bar $w={518} $top>
          <Grip />
          <Tools $pl={3}>
            {editTools.map(([icon, on], i) => <Tool key={i} $kind={on ? "down" : "up"}>{icon}</Tool>)}
            <Gap $w={14} />
            {viewTools.map((icon, i) => <Tool key={i} $kind="up">{icon}</Tool>)}
          </Tools>
        </Bar>
      </BarRow>
      <Main>
        <SidePanel>
          <PanelTitle>Edit Traffic Light</PanelTitle>
          <PanelBody>
            <Groups>
              <Section title="Traffic Light">
                <Row><Label>Junction ID</Label><Field $grey>htddj_gsndj</Field></Row>
                <Row><Label>TLS ID</Label><Field>htddj_gsndj</Field></Row>
                <Row><Label>type</Label><Combo value="static" /></Row>
                <Buttons>
                  <Button><JoinIcon />Join</Button>
                  <Button $off><JoinIcon off />Disjoin</Button>
                </Buttons>
              </Section>
              <Section title="Traffic Light Programs">
                <Row><Label>programID</Label><Combo value="0" /></Row>
                <Buttons>
                  <Button><LightIcon />Duplicate</Button>
                  <Button><ResetIcon />Reset single</Button>
                  <Button><DeleteIcon />Delete</Button>
                  <Button $off><ResetIcon off />Reset all</Button>
                  <Button $off><RoundOff />Save</Button>
                  <Button $off><RoundOff x />Cancel</Button>
                </Buttons>
              </Section>
              <Section title="Traffic light Attributes">
                <Row><Label>offset</Label><Field>0.00</Field></Row>
                <Row><Label $button>parameters</Label><Field /></Row>
                <Buttons><Button $off $wide>Assign E1 detectors</Button></Buttons>
              </Section>
              <Section
                title="Phases"
                extra={<><HeadBtn $w={60}>Expand</HeadBtn><HeadBtn $w={22}><ResetIcon /></HeadBtn></>}
              >
                <Table>
                  <Cell $kind="none" />
                  <Cell $kind="head">dur</Cell>
                  <Cell $kind="head">state</Cell>
                  <Cell $kind="head">next</Cell>
                  <Cell $kind="head">name</Cell>
                  {phases.map(([dur, state], i) => (
                    <React.Fragment key={i}>
                      <Cell $kind={i === 0 ? "active" : "index"}>{i}</Cell>
                      <Cell $kind="value">{dur}</Cell>
                      <Cell $kind="state">{state}</Cell>
                      <Cell $kind="value" />
                      <Cell $kind="value" />
                    </React.Fragment>
                  ))}
                  <SigmaCell $kind="index">Σ</SigmaCell>
                  <Cell $kind="head">90.00</Cell>
                  <Cell $kind="head">Links: 19</Cell>
                </Table>
                <Buttons>
                  <Button>Clean States</Button><Button>Add States</Button>
                  <Button>Group Sig.</Button><Button>Ungroup Sig.</Button>
                </Buttons>
              </Section>
              <Section title="TLS Program File">
                <Buttons $first={147}>
                  <Button><FolderIcon />Load</Button>
                  <Button><OliveFloppy />Save</Button>
                </Buttons>
              </Section>
            </Groups>
            <Scroll><ScrollBtn><Tri /></ScrollBtn><ScrollBtn><Tri down /></ScrollBtn></Scroll>
          </PanelBody>
        </SidePanel>
        <Canvas><Network /></Canvas>
      </Main>
    </Window>
  );
}
